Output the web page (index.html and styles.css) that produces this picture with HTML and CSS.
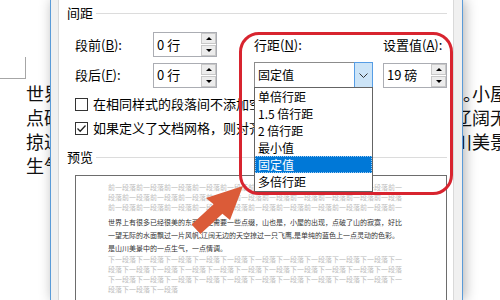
FILE: index.html
```html
<!DOCTYPE html>
<html lang="zh-CN">
<head>
  <meta charset="UTF-8" />
  <meta name="viewport" content="width=device-width, initial-scale=1.0"/>
  <title>段落</title>
  <link rel="stylesheet" href="styles.css">
</head>
<body>

  <div class="doc">
    <div class="doc-left">
      <div class="corner"></div>
      <p>世界上</p>
      <p>点破了</p>
      <p>掠过一</p>
      <p>生气，</p>
    </div>
    <div class="doc-right">
      <p class="first"><span class="stop">。</span>小屋</p>
      <p>辽阔无</p>
      <p>川美景</p>
    </div>
  </div>

  <div class="dialog">
    <div class="tab">
      <div class="group-title"><span>间距</span><i></i></div>

      <div class="spacing">
        <label>段前(<u>B</u>):</label>
        <div class="spin"><span>0 行</span><div class="arrows"><b class="up"></b><b class="down"></b></div></div>
        <label>行距(<u>N</u>):</label>
        <label>设置值(<u>A</u>):</label>

        <label>段后(<u>F</u>):</label>
        <div class="spin"><span>0 行</span><div class="arrows"><b class="up"></b><b class="down"></b></div></div>
        <div class="combo">
          <span>固定值</span>
          <div class="drop-btn">
            <svg width="9" height="5" viewBox="0 0 9 5"><polyline points="0.5,0.5 4.5,4.5 8.5,0.5" fill="none" stroke="#333" stroke-width="1"/></svg>
          </div>
          <ul class="list">
            <li>单倍行距</li>
            <li>1.5 倍行距</li>
            <li>2 倍行距</li>
            <li>最小值</li>
            <li class="selected">固定值</li>
            <li>多倍行距</li>
          </ul>
        </div>
        <div class="spin"><span>19 磅</span><div class="arrows"><b class="up"></b><b class="down"></b></div></div>
      </div>

      <div class="check first-check">
        <span class="box"></span>
        <span>在相同样式的段落间不添加空格(<u>C</u>)</span>
      </div>
      <div class="check">
        <span class="box">
          <svg width="11" height="11" viewBox="0 0 11 11"><polyline points="1.5,5.5 4.2,8.3 9.5,2.5" fill="none" stroke="#222" stroke-width="1.3"/></svg>
        </span>
        <span>如果定义了文档网格，则对齐到网格(<u>W</u>)</span>
      </div>

      <div class="group-title preview-title"><span>预览</span><i></i></div>

      <div class="preview">
        <div class="prev">前一段落前一段落前一段落前一段落前一段落前一段落前一段落前一段落前一段落前一段落前一</div>
        <div class="prev">段落前一段落前一段落前一段落前一段落前一段落前一段落前一段落前一段落前一段落前一段落</div>
        <div class="prev">前一段落前一段落前一段落前一段落前一段落前一段落前一段落前一段落前一段落前一段落前一</div>
        <div class="cur">
          <div>世界上有很多已经很美的东西，还需要一些点缀，山也是，小屋的出现，点破了山的寂寞，好比</div>
          <div>一望无际的水面飘过一片风帆,辽阔无边的天空掠过一只飞鹰,是单纯的蓝色上一点灵动的色彩。</div>
          <div>是山川美景中的一点生气，一点情调。</div>
        </div>
        <div class="next">下一段落下一段落下一段落下一段落下一段落下一段落下一段落下一段落下一段落下一段落下一</div>
        <div class="next">段落下一段落下一段落下一段落下一段落下一段落下一段落下一段落下一段落下一段落下一段落</div>
        <div class="next">下一段落下一段落下一段落下一段落下一段落下一段落下一段落下一段落下一段落下一段落下一</div>
        <div class="next">段落下一段落下一段落</div>
      </div>

      <div class="callout"></div>
      <svg class="arrow" width="58" height="56" viewBox="0 0 58 56">
        <polygon points="55,4 42,38 34.4,31.8 12.4,52.1 3.6,42.5 25.6,22.2 18,16" fill="#db5b38"/>
      </svg>
    </div>
  </div>

</body>
</html>
```

FILE: styles.css
```css
body {
  margin: 0;
  width: 500px;
  height: 300px;
  overflow: hidden;
  position: relative;
  background-color: #fff;
  color: #000;
  font-family: "Noto Sans CJK SC", sans-serif;
}

/* document behind the dialog */
.doc {
  display: flex;
  justify-content: space-between;
}

.doc p {
  margin: 0;
  font-size: 18px;
  line-height: 24px;
  white-space: nowrap;
  color: #111;
}

.doc-left {
  width: 50px;
  overflow: hidden;
}

.doc-left p {
  padding-left: 26px;
}

.corner {
  width: 25px;
  height: 21px;
  margin-top: 57px;
  margin-bottom: 2px;
  border-right: 1px solid #a6a6a6;
  border-bottom: 1px solid #a6a6a6;
}

.doc-right {
  width: 46px;
  padding-top: 81px;
  overflow: hidden;
}

.doc-right .first {
  padding-left: 9px;
}

.stop {
  font-feature-settings: "halt";
}

/* dialog */
.dialog {
  position: absolute;
  left: 50px;
  top: 0;
  width: 413px;
  height: 300px;
  box-sizing: border-box;
  padding: 0 8px 0 7px;
  background-color: #f0f0f0;
  border-left: 1px solid #5a9bd8;
  border-right: 1px solid #5a9bd8;
  box-shadow: 2px 0 12px rgba(0, 0, 0, 0.3);
}

.tab {
  position: relative;
  height: 100%;
  padding-top: 5px;
  box-sizing: border-box;
  background-color: #fff;
  border-left: 1px solid #d9d9d9;
  border-right: 1px solid #d9d9d9;
  font-size: 13px;
}

.group-title {
  display: flex;
  align-items: center;
  height: 16px;
  line-height: 16px;
  padding: 0 6px 0 8px;
}

.group-title i {
  flex: 1;
  height: 1px;
  margin-left: 3px;
  background-color: #dcdcdc;
}

.spacing {
  display: grid;
  grid-template-columns: 78px 101px 129px 64px;
  grid-template-rows: 25px 26px;
  row-gap: 5px;
  align-items: center;
  margin: 11px 0 0 16px;
  line-height: 16px;
}

.spin {
  display: flex;
  align-items: center;
  width: 64px;
  height: 25px;
  box-sizing: border-box;
  padding-left: 3px;
  border: 1px solid #abadb3;
}

.arrows {
  display: flex;
  flex-direction: column;
  gap: 1px;
  margin-left: auto;
  width: 15px;
  height: 100%;
}

.arrows b {
  flex: 1;
  display: flex;
  align-items: center;
  justify-content: center;
  background-color: #ececec;
  border: 1px solid #c8c8c8;
}

.arrows b::after {
  content: "";
  border-left: 3px solid transparent;
  border-right: 3px solid transparent;
}

.arrows .up::after {
  border-bottom: 3px solid #000;
}

.arrows .down::after {
  border-top: 3px solid #000;
}

.combo {
  position: relative;
  display: flex;
  align-items: center;
  width: 119px;
  height: 26px;
  box-sizing: border-box;
  padding-left: 3px;
  border: 1px solid #8c8c8c;
  font-size: 12px;
  z-index: 2;
}

.drop-btn {
  display: flex;
  align-items: center;
  justify-content: center;
  align-self: stretch;
  width: 17px;
  margin: -1px -1px -1px auto;
  background-color: #cce4f7;
  border: 1px solid #569de5;
}

.list {
  position: absolute;
  top: 100%;
  left: -1px;
  width: 119px;
  box-sizing: border-box;
  margin: 0;
  padding: 0 0 1px;
  list-style: none;
  background-color: #fff;
  border: 1px solid #646464;
}

.list li {
  height: 17px;
  line-height: 17px;
  padding-left: 3px;
}

.list .selected {
  background-color: #0078d7;
  color: #fff;
  outline: 1px dotted #9fcaf0;
  outline-offset: -1px;
}

.check {
  display: flex;
  align-items: center;
  gap: 5px;
  height: 24px;
  margin-left: 16px;
  line-height: 16px;
  white-space: nowrap;
}

.first-check {
  margin-top: 4px;
}

.box {
  display: flex;
  align-items: center;
  justify-content: center;
  width: 13px;
  height: 13px;
  box-sizing: border-box;
  border: 1px solid #333;
  background-color: #fff;
}

.preview-title {
  margin-top: 9px;
}

.preview {
  width: 372px;
  height: 140px;
  box-sizing: border-box;
  margin: 10px 0 0 16px;
  padding: 6px 0 0 32px;
  border: 1px solid #6d6d6d;
  font-size: 7px;
  white-space: nowrap;
}

.prev, .next {
  line-height: 10px;
  color: #bdbdbd;
}

.cur {
  line-height: 13px;
  margin: 3.5px 0 -1px;
  color: #333;
}

/* annotation drawn over the screenshot */
.callout {
  position: absolute;
  left: 180px;
  top: 32px;
  width: 214px;
  height: 163px;
  box-sizing: border-box;
  border: 3px solid #d8242f;
  border-radius: 20px;
  z-index: 3;
}

.arrow {
  position: absolute;
  left: 129px;
  top: 182px;
  z-index: 3;
}
```
